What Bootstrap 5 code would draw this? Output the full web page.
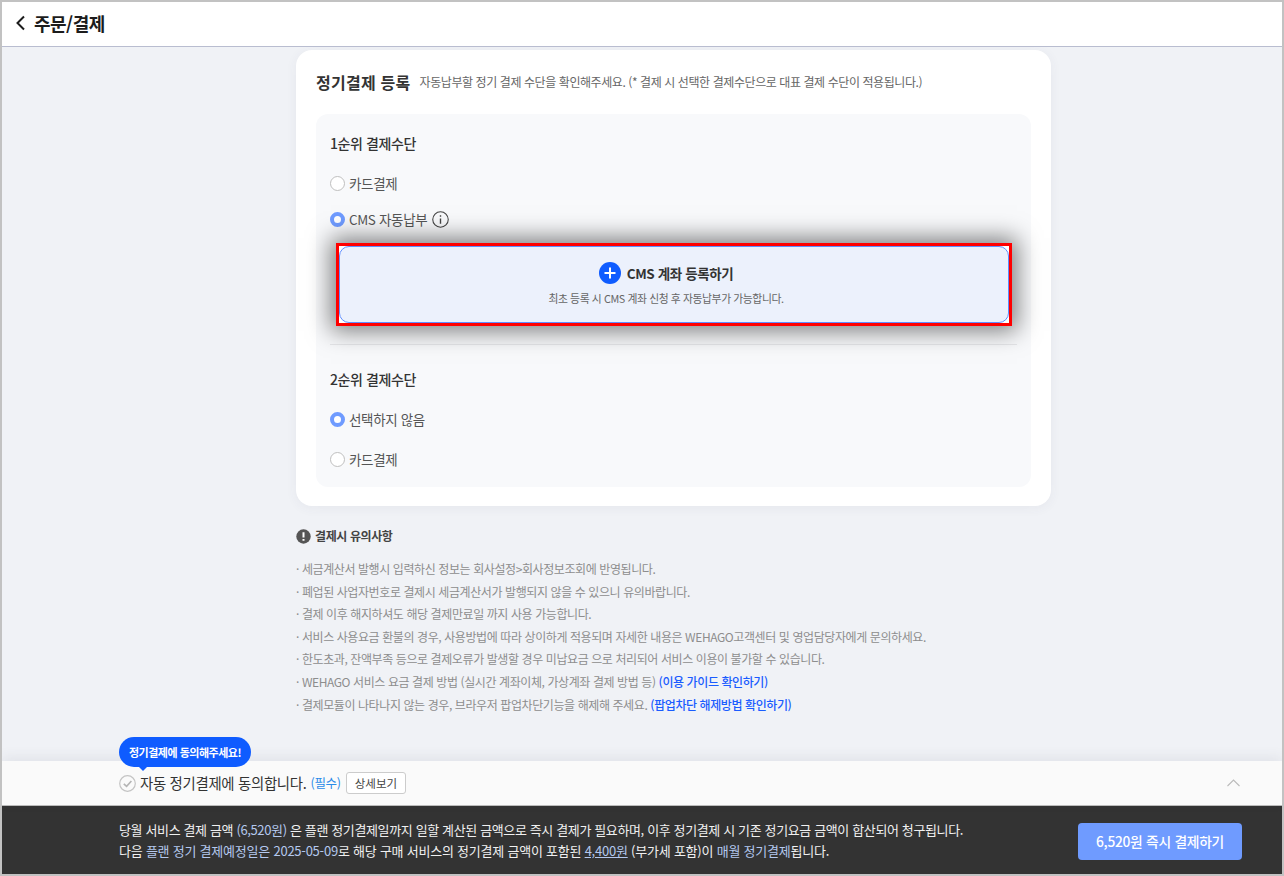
<!DOCTYPE html>
<html lang="ko">
<head>
<meta charset="utf-8">
<title>주문/결제</title>
<link href="https://cdn.jsdelivr.net/npm/bootstrap@5.3.0/dist/css/bootstrap.min.css" rel="stylesheet">
<style>
html,body{height:100%;overflow:hidden}
body{font-family:"Noto Sans CJK KR","Noto Sans",sans-serif;background:#c0c0c0;letter-spacing:-.4px}
.shell{height:876px;border:2px solid #c2c2c2;background:#f0f2f6;position:relative;overflow:hidden}
.topbar{height:45px;background:#fff;border-bottom:1px solid #b9bdd0;padding:0 0 2px 13px;gap:8px;font-size:18px;font-weight:700;color:#1c1c1c;letter-spacing:-.5px}
.mainarea{flex:1 1 auto;min-height:0;overflow:hidden;padding-top:3px}
.column{width:755px;margin-left:294px}
.paycard{background:#fff;border-radius:16px;height:456px;padding:18px 20px 19px 20px;box-shadow:0 2px 12px rgba(60,70,100,.06)}
.cardhead{height:27px;gap:9px;margin-bottom:19px}
.cardtitle{font-size:16px;font-weight:700;color:#333;letter-spacing:.25px}
.cardsub{font-size:12px;color:#666;letter-spacing:-.42px}
.panelbox{background:#f8f9fb;border-radius:12px;height:373px;padding:18px 14px 0 14px}
.grouptitle{font-size:14px;font-weight:500;color:#333;line-height:22px}
.radioline{font-size:13.5px;color:#555;gap:4px;line-height:20px;letter-spacing:-.35px}
.radiodot{width:15px;height:15px;border-radius:50%;border:1px solid #bfbfbf;background:#fff;flex:none}
.radiodot.onstate{border:4px solid #6f9bff;background:#fff}
.infodot{width:17px;height:17px;margin-left:1px}
.r1{margin-top:19px}.r2{margin-top:16px}
.cmsbox{position:relative;margin:14px 5px 0 6px;height:83px;border:3px solid #f00;box-shadow:0 0 22px 5px rgba(0,0,0,.5);background:#fff}
.cmsinner{height:100%;border:1px solid #5f8eff;border-radius:10px;background:#ecf1fc;padding:0 16px 4px 0}
.cmstitle{font-size:13.5px;font-weight:700;color:#333;gap:6px;line-height:24px;letter-spacing:-.4px}
.cmssub{font-size:10.8px;color:#666;margin-top:6px;line-height:14px}
.plusdot{width:22px;height:22px;flex:none}
.divide{border-top:1px solid #e6e7ea;margin-top:18px}
.t2{margin-top:23px}.r3{margin-top:19px}.r4{margin-top:20px}
.noteshead{margin:21px 0 0 0;gap:4px;font-size:12px;font-weight:700;color:#444;line-height:18px}
.notelist{margin:13px 0 0 0;padding:0;list-style:none;font-size:12px;color:#8d8d8d;letter-spacing:-.41px}
.notelist li{line-height:22.6px;white-space:nowrap}
.notelist a{color:#1a5cff;text-decoration:none;font-weight:500}
.agreebar{height:45px;background:#fafafa;position:relative;padding:0 42px 0 117px;gap:4px;box-shadow:0 -4px 12px rgba(60,70,90,.08);font-size:14.4px;color:#333;letter-spacing:-.3px;border-bottom:1px solid #bbb}
.reqtag{color:#2a8be8;font-size:12.5px}
.detailbtn{font-size:11.5px;height:22px;padding:0 8px;line-height:20px;background:#fff;border:1px solid #ccc;border-radius:3px;color:#444;margin-left:1px;--bs-btn-padding-y:0}
.hintpill{position:absolute;left:117px;top:-24px;height:30px;width:132px;border-radius:15px;background:#0f5cff;color:#fff;font-size:11px;font-weight:700;letter-spacing:-.5px}
.hintpill::after{content:"";position:absolute;left:20px;bottom:-4px;border:4px solid transparent;border-bottom:0;border-top-color:#0f5cff}
.paybar{height:68px;background:#333;padding:0 40px 0 117px;color:#f0f0f0;font-size:13px;line-height:21px}
.payone{letter-spacing:-.37px}
.paytwo{letter-spacing:-.23px}
.tint{color:#b4c8ee}
.paybtn{width:164px;height:37px;background:#6f9bff;border:0;border-radius:4px;color:#fff;font-size:13.8px;font-weight:500;padding:0;margin-top:2px;--bs-btn-hover-bg:#6f9bff;--bs-btn-hover-color:#fff;letter-spacing:-.3px}
</style>
</head>
<body>
<div class="shell d-flex flex-column">
  <header class="topbar d-flex align-items-center flex-none">
    <svg width="11" height="16" viewBox="0 0 11 16" fill="none" stroke="#1c1c1c" stroke-width="2"><path d="M9 1.5 2.5 8 9 14.5"/></svg>
    <span>주문/결제</span>
  </header>
  <main class="mainarea">
    <div class="column">
      <section class="paycard">
        <div class="cardhead d-flex align-items-center">
          <span class="cardtitle">정기결제 등록</span>
          <span class="cardsub">자동납부할 정기 결제 수단을 확인해주세요. (* 결제 시 선택한 결제수단으로 대표 결제 수단이 적용됩니다.)</span>
        </div>
        <div class="panelbox">
          <div class="grouptitle">1순위 결제수단</div>
          <div class="radioline r1 d-flex align-items-center"><span class="radiodot"></span><span>카드결제</span></div>
          <div class="radioline r2 d-flex align-items-center"><span class="radiodot onstate"></span><span>CMS 자동납부</span>
            <svg class="infodot" viewBox="0 0 16 16" fill="none" stroke="#444"><circle cx="8" cy="8" r="7.3"/><path d="M8 7v5M8 4v1.5" stroke-width="1.3"/></svg>
          </div>
          <div class="cmsbox">
            <div class="cmsinner d-flex flex-column align-items-center justify-content-center">
              <div class="cmstitle d-flex align-items-center">
                <svg class="plusdot" viewBox="0 0 22 22"><circle cx="11" cy="11" r="11" fill="#0f5cff"/><path d="M11 5.5v11M5.5 11h11" stroke="#fff" stroke-width="2"/></svg>
                <span>CMS 계좌 등록하기</span>
              </div>
              <div class="cmssub">최초 등록 시 CMS 계좌 신청 후 자동납부가 가능합니다.</div>
            </div>
          </div>
          <div class="divide"></div>
          <div class="grouptitle t2">2순위 결제수단</div>
          <div class="radioline r3 d-flex align-items-center"><span class="radiodot onstate"></span><span>선택하지 않음</span></div>
          <div class="radioline r4 d-flex align-items-center"><span class="radiodot"></span><span>카드결제</span></div>
        </div>
      </section>
      <div class="noteshead d-flex align-items-center">
        <svg width="15" height="15" viewBox="0 0 15 15"><circle cx="7.5" cy="7.5" r="7.2" fill="#555"/><path d="M7.5 3.2v5.2M7.5 10v1.8" stroke="#fff" stroke-width="2"/></svg>
        <span>결제시 유의사항</span>
      </div>
      <ul class="notelist">
        <li>· 세금계산서 발행시 입력하신 정보는 회사설정&gt;회사정보조회에 반영됩니다.</li>
        <li>· 폐업된 사업자번호로 결제시 세금계산서가 발행되지 않을 수 있으니 유의바랍니다.</li>
        <li>· 결제 이후 해지하셔도 해당 결제만료일 까지 사용 가능합니다.</li>
        <li>· 서비스 사용요금 환불의 경우, 사용방법에 따라 상이하게 적용되며 자세한 내용은 WEHAGO고객센터 및 영업담당자에게 문의하세요.</li>
        <li>· 한도초과, 잔액부족 등으로 결제오류가 발생할 경우 미납요금 으로 처리되어 서비스 이용이 불가할 수 있습니다.</li>
        <li>· WEHAGO 서비스 요금 결제 방법 (실시간 계좌이체, 가상계좌 결제 방법 등) <a href="#">(이용 가이드 확인하기)</a></li>
        <li>· 결제모듈이 나타나지 않는 경우, 브라우저 팝업차단기능을 해제해 주세요. <a href="#">(팝업차단 해제방법 확인하기)</a></li>
      </ul>
    </div>
  </main>
  <div class="agreebar d-flex align-items-center flex-none">
    <div class="hintpill d-flex align-items-center justify-content-center">정기결제에 동의해주세요!</div>
    <svg width="17" height="17" viewBox="0 0 17 17" fill="none"><circle cx="8.5" cy="8.5" r="7.8" stroke="#c4c4c4" stroke-width="1.2"/><path d="M4.8 8.8 7.6 11.4 12.4 6" stroke="#b5b5b5" stroke-width="1.6"/></svg>
    <span>자동 정기결제에 동의합니다.</span>
    <span class="reqtag">(필수)</span>
    <button type="button" class="btn detailbtn">상세보기</button>
    <svg class="ms-auto" width="13" height="8" viewBox="0 0 13 8" fill="none" stroke="#bbb" stroke-width="1.1"><path d="M.5 7 6.5 1l6 6"/></svg>
  </div>
  <div class="paybar d-flex align-items-center justify-content-between flex-none">
    <div>
      <div class="payone">당월 서비스 결제 금액 <span class="tint">(6,520원)</span> 은 플랜 정기결제일까지 일할 계산된 금액으로 즉시 결제가 필요하며, 이후 정기결제 시 기존 정기요금 금액이 합산되어 청구됩니다.</div>
      <div class="paytwo">다음 <span class="tint">플랜 정기 결제예정일은 2025-05-09</span>로 해당 구매 서비스의 정기결제 금액이 포함된 <span class="tint text-decoration-underline">4,400원</span> (부가세 포함)이 <span class="tint">매월 정기결제</span>됩니다.</div>
    </div>
    <button type="button" class="btn paybtn">6,520원 즉시 결제하기</button>
  </div>
</div>
</body>
</html>
